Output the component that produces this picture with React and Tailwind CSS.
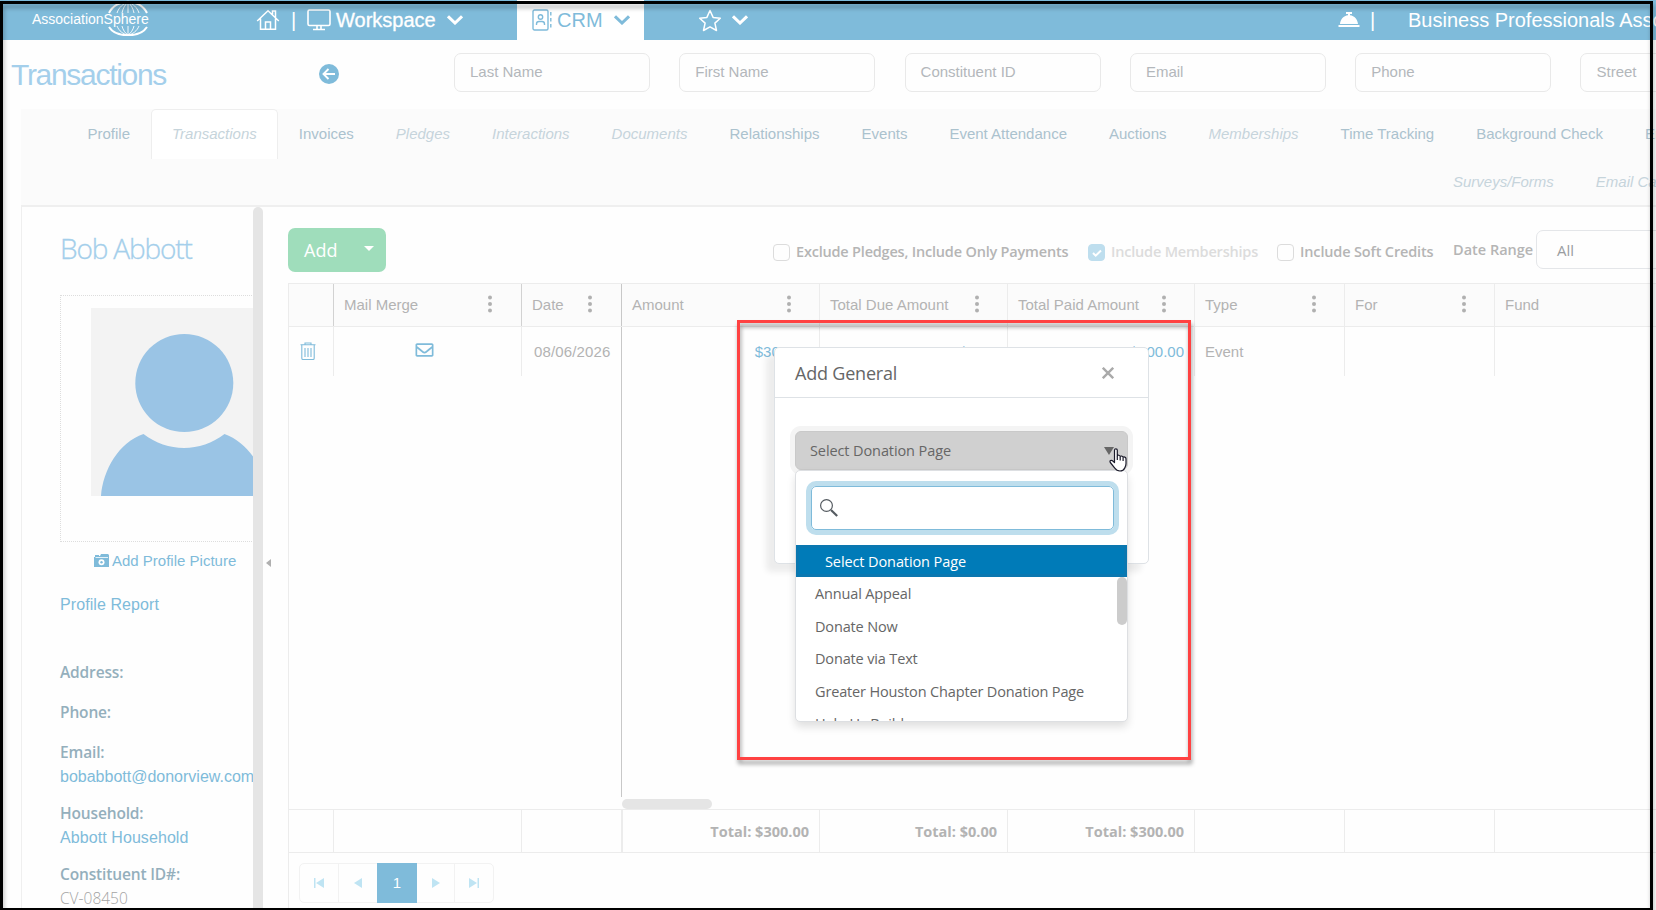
import { FaRegEnvelope } from 'react-icons/fa';
import clsx from 'clsx';

const searchFields = ['Last Name', 'First Name', 'Constituent ID', 'Email', 'Phone', 'Street'];

const tabs = [
  { label: 'Profile' },
  { label: 'Transactions', empty: true, active: true },
  { label: 'Invoices' },
  { label: 'Pledges', empty: true },
  { label: 'Interactions', empty: true },
  { label: 'Documents', empty: true },
  { label: 'Relationships' },
  { label: 'Events' },
  { label: 'Event Attendance' },
  { label: 'Auctions' },
  { label: 'Memberships', empty: true },
  { label: 'Time Tracking' },
  { label: 'Background Check' },
  { label: 'Employment' },
];

const moreTabs = [
  { label: 'Surveys/Forms', empty: true },
  { label: 'Email Campaigns', empty: true },
];

const columns = [
  { key: 'amount', label: 'Amount', width: 'w-[198px]', value: '$300.00', total: 'Total: $300.00', money: true },
  { key: 'due', label: 'Total Due Amount', width: 'w-[188px]', value: '$0.00', total: 'Total: $0.00', money: true },
  { key: 'paid', label: 'Total Paid Amount', width: 'w-[187px]', value: '$300.00', total: 'Total: $300.00', money: true },
  { key: 'type', label: 'Type', width: 'w-[150px]', value: 'Event' },
  { key: 'for', label: 'For', width: 'w-[150px]', value: '' },
  { key: 'fund', label: 'Fund', width: 'w-[200px]', value: '' },
];

const donationPages = ['Annual Appeal', 'Donate Now', 'Donate via Text', 'Greater Houston Chapter Donation Page', 'Help Us Build'];

function Chevron({ className }) {
  return (
    <svg viewBox="0 0 16 10" className={clsx('h-[10px] w-4 shrink-0', className)} fill="none" stroke="currentColor" strokeWidth="3">
      <path d="M1 1.3 8 8l7-6.7" />
    </svg>
  );
}

function Globe() {
  return (
    <svg viewBox="0 0 42 36" className="absolute left-[107px] top-0 h-9 w-[42px]" fill="none" stroke="white" strokeWidth="0.9">
      <path d="M2 13C9-2 33-2 40 13" strokeWidth="2" />
      <path d="M10 13c2-6 6-9 11-11M15 13c1-5 3-8 6-11M32 13c-2-6-6-9-11-11M27 13c-1-5-3-8-6-11M21 1v12" />
      <path d="M2 27c7 11 31 11 38 0" strokeWidth="2" />
      <path d="M10 26c2 5 6 8 11 9M15 26c1 4 3 7 6 9M32 26c-2 5-6 8-11 9M27 26c-1 4-3 7-6 9M21 26v9" />
    </svg>
  );
}

function TopBar() {
  return (
    <header className="flex h-10 shrink-0 items-center bg-[#7fbbda] text-xl text-white">
      <div className="relative h-10 w-[256px] shrink-0">
        <Globe />
        <div className="pl-8 pt-[10px] text-[14px] leading-[18px]">AssociationSphere</div>
      </div>
      <svg viewBox="0 0 24 22" className="h-[22px] w-6 shrink-0" fill="none" stroke="white" strokeWidth="1.5">
        <path d="M1.200 12 12 1.800 22.800 12M4.500 9.500v10.700h15V9.500M9.500 20v-7h5v7M16.500 5.500V2h3v6.500" />
      </svg>
      <span className="ml-[11px] w-[6px] shrink-0">|</span>
      <svg viewBox="0 0 24 22" className="ml-[10px] h-[22px] w-6 shrink-0" fill="none" stroke="white" strokeWidth="1.6">
        <rect x="1" y="1" width="22" height="15.500" rx="1.500" />
        <path d="M10 16.500v3.500M14 16.500v3.500M6 20.500h12" />
      </svg>
      <span className="ml-[5px] w-[111px] shrink-0 [-webkit-text-stroke:0.3px_white]">Workspace</span>
      <Chevron />
      <div className="ml-[54px] flex h-10 w-[127px] shrink-0 items-center bg-white pl-[15px] text-[#7fbbda]">
        <svg viewBox="0 0 20 22" className="h-[22px] w-5" fill="none" stroke="currentColor" strokeWidth="1.4">
          <rect x="1" y="1" width="15" height="20" rx="1.500" />
          <circle cx="8.500" cy="8" r="2.200" />
          <path d="M4.500 16v-1c0-1.500 1-2.500 2.500-2.500h3c1.500 0 2.500 1 2.500 2.500v1" />
          <path d="M18.800 3v16" strokeDasharray="3.500 2.500" />
        </svg>
        <span className="ml-[5px] w-[57px]">CRM</span>
        <Chevron />
      </div>
      <svg viewBox="0 0 24 23" className="ml-[54px] h-[23px] w-6 shrink-0" fill="none" stroke="white" strokeWidth="1.5" strokeLinejoin="round">
        <path d="m12 1.500 3.100 6.900 7.200.8-5.400 4.900 1.600 7.400L12 17.800l-6.500 3.700 1.600-7.400L1.700 9.200l7.200-.8z" />
      </svg>
      <Chevron className="ml-[10px]" />
      <svg viewBox="0 0 22 16" className="ml-[590px] h-4 w-[22px] shrink-0" fill="white">
        <path d="M8 0h6v2h-2v1.300c4.500.5 7.500 4 8 8.700H2c.5-4.700 3.500-8.200 8-8.700V2H8zM.5 13h21v2H.500z" />
      </svg>
      <span className="ml-[10px] w-[38px] shrink-0">|</span>
      <span className="whitespace-nowrap">Business Professionals Association</span>
    </header>
  );
}

function SearchRow() {
  return (
    <div className="flex h-[69px] shrink-0 pt-[13px]">
      <h1 className="w-[307px] shrink-0 pl-[11px] pt-[4px] text-[30px] leading-9 tracking-[-1.3px] text-[#a4cfeb]">Transactions</h1>
      <svg viewBox="0 0 20 20" className="ml-3 mt-[10.5px] h-5 w-5 shrink-0">
        <circle cx="10" cy="10" r="10" fill="#7fbbda" />
        <path d="M9.500 5 4.500 10l5 5M5 10h11" fill="none" stroke="white" strokeWidth="1.900" />
      </svg>
      <div className="ml-[115px] flex shrink-0 gap-[29.3px]">
        {searchFields.map((name) => (
          <div
            key={name}
            className="h-[39px] w-[196px] shrink-0 rounded-[7px] border border-[#e9e9e9] pl-[15px] pt-[9px] text-[15px] leading-[18px] text-[#b3b7bb]"
          >
            {name}
          </div>
        ))}
      </div>
    </div>
  );
}

function Tab({ label, empty, active }) {
  return (
    <div
      className={clsx(
        'h-[50px] shrink-0 whitespace-nowrap rounded-t-[5px] border border-b-0 px-[20px] pt-[15px] text-[15px] leading-[18px]',
        active ? 'border-[#eeeeee] bg-white' : 'border-transparent',
        empty ? 'italic text-[#c6d4db]' : 'text-[#abc2ce]'
      )}
    >
      {label}
    </div>
  );
}

function TabStrip() {
  return (
    <nav className="ml-[21px] flex h-[98px] shrink-0 flex-col border-b-2 border-[#efefef] bg-[#fbfbfb]">
      <div className="flex h-12 pl-[45.5px]">
        {tabs.map((t) => (
          <Tab key={t.label} {...t} />
        ))}
      </div>
      <div className="flex pl-[1411px]">
        {moreTabs.map((t) => (
          <Tab key={t.label} {...t} />
        ))}
      </div>
    </nav>
  );
}

function Field({ label, children }) {
  return (
    <div className="mb-[14px]">
      <div className="font-['Open_Sans','Noto_Sans',sans-serif] text-[15.5px] font-semibold leading-6 tracking-[-0.15px] text-[#94afbc]">{label}</div>
      {children}
    </div>
  );
}

function ProfilePanel() {
  return (
    <aside className="flex w-[242px] shrink-0 border-l border-[#efefef]">
      <div className="w-[231px] shrink-0 overflow-hidden pl-[38px] text-base text-[#7fbbda]">
        <h2 className="pt-[22px] font-['Open_Sans','Noto_Sans',sans-serif] text-[28px] font-light leading-[38px] tracking-[-1.15px] text-[#a4cfeb] [-webkit-text-stroke:0.3px_#a4cfeb]">
          Bob Abbott
        </h2>
        <div className="mt-[28px] h-[247px] w-[260px] border border-dotted border-[#dddddd] pl-[30px] pt-3">
          <svg viewBox="0 0 188 188" className="h-[188px] w-[188px] bg-[#f3f3f3]" fill="#9ac4e5">
            <circle cx="93.300" cy="75" r="49" />
            <path d="M10 188c2-26 18-54 42.500-62 24 18.500 57 18.500 81 0 24.500 9 41 36 43.500 62z" />
          </svg>
        </div>
        <div className="mt-[10px] flex h-[18px] items-center pl-[34px] text-[15px]">
          <svg viewBox="0 0 15 14" className="mr-[3px] h-[14px] w-[15px]">
            <path d="M0 3h1V1h4v1h1l1-2h7l1 1v12H0z" fill="#7fbbda" />
            <path d="M1.500 3.500h12.500" stroke="white" strokeWidth="0.800" />
            <circle cx="7.500" cy="8.300" r="3" fill="white" />
            <circle cx="7.500" cy="8.300" r="1.200" fill="#7fbbda" />
          </svg>
          Add Profile Picture
        </div>
        <div className="mb-[43px] mt-[23px] leading-6 tracking-[0.08px]">Profile Report</div>
        <div className="flex flex-col">
          <Field label="Address:" />
          <div className="mt-[2px]">
            <Field label="Phone:" />
          </div>
          <div className="mt-[2px]">
            <Field label="Email:">
              <div className="-mb-px pt-px leading-[23px]">bobabbott@donorview.com</div>
            </Field>
          </div>
          <Field label="Household:">
            <div className="-mb-px pt-px leading-[23px] tracking-[0.08px]">Abbott Household</div>
          </Field>
          <Field label="Constituent ID#:">
            <div className="pt-px font-['Open_Sans','Noto_Sans',sans-serif] text-[15.5px] font-light leading-[23px] text-[#a4a4a4]">CV-08450</div>
          </Field>
        </div>
      </div>
      <div className="w-[10px] rounded-t-[5px] bg-[#e5e5e5]" />
    </aside>
  );
}

function CheckOption({ label, checked, labelClass }) {
  return (
    <label className="flex h-[17px] items-center">
      <span
        className={clsx(
          'flex h-[17px] w-[17px] items-center justify-center rounded-[4px] border',
          checked ? 'border-[#bedeee] bg-[#bedeee]' : 'border-[#dcdcdc]'
        )}
      >
        {checked && (
          <svg viewBox="0 0 12 12" className="h-3 w-3" fill="none" stroke="white" strokeWidth="2">
            <path d="m2 6 2.700 2.700L10 3.500" />
          </svg>
        )}
      </span>
      <span className={clsx('ml-[6px] whitespace-nowrap pb-[2px]', labelClass)}>{label}</span>
    </label>
  );
}

function Toolbar() {
  return (
    <div className="flex h-[76px] shrink-0 pt-[21px]">
      <button className="flex h-[44px] w-[98px] shrink-0 items-center rounded-[7px] bg-[#9fddbb] pl-[16px] font-['Open_Sans','Noto_Sans',sans-serif] text-[18px] text-white">
        <span className="w-[60px] text-left">Add</span>
        <span className="mb-[3px] border-x-[5px] border-t-[5px] border-x-transparent border-t-white" />
      </button>
      <div className="ml-[387px] flex shrink-0 pt-4 font-['Open_Sans','Noto_Sans',sans-serif] text-[14.5px] font-semibold leading-5 text-[#b5b5b5]">
        <div className="w-[315px]">
          <CheckOption label="Exclude Pledges, Include Only Payments" labelClass="tracking-[-0.2px]" />
        </div>
        <div className="w-[189px]">
          <CheckOption checked label="Include Memberships" labelClass="tracking-[-0.2px] text-[#dcdcdc]" />
        </div>
        <div className="w-[176px]">
          <CheckOption label="Include Soft Credits" labelClass="tracking-[-0.15px]" />
        </div>
      </div>
      <div className="flex shrink-0 pt-[2px] font-['Open_Sans','Noto_Sans',sans-serif] text-[14.5px] text-[#b5b5b5]">
        <span className="w-[83px] whitespace-nowrap pt-[10px] font-semibold leading-5">Date Range</span>
        <div className="h-[39px] w-[180px] rounded-[7px] border border-[#e4e6e9] pl-5 pt-[9px] text-[15px] leading-5 text-[#9a9da1]">All</div>
      </div>
    </div>
  );
}

function MenuDots({ className }) {
  return (
    <svg viewBox="0 0 4 18" className={clsx('h-[18px] w-1', className)} fill="#b0b0b0">
      <circle cx="2" cy="2.500" r="2" />
      <circle cx="2" cy="9" r="2" />
      <circle cx="2" cy="15.500" r="2" />
    </svg>
  );
}

function TransactionsGrid() {
  return (
    <div className="flex min-h-0 flex-1 flex-col border-l border-[#ececec] text-[15px] text-[#b3b3b3]">
      <div className="flex h-[44px] shrink-0 border-y border-[#ececec] bg-[#fbfbfb] leading-[18px]">
        <div className="w-[45px] shrink-0 border-r border-[#d2d2d2]" />
        <div className="flex w-[188px] shrink-0 justify-between border-r border-[#d2d2d2] pl-[10px] pr-[29px] pt-[12px]">
          Mail Merge
          <MenuDots className="-mt-[1px]" />
        </div>
        <div className="flex w-[100px] shrink-0 justify-between border-r border-[#c8c8c8] pl-[10px] pr-[29px] pt-[12px]">
          Date
          <MenuDots className="-mt-[1px]" />
        </div>
        {columns.map((c) => (
          <div key={c.key} className={clsx('flex shrink-0 justify-between whitespace-nowrap border-r border-[#ececec] pl-[10px] pr-[28px] pt-[12px]', c.width)}>
            {c.label}
            <MenuDots className="-mt-[1px]" />
          </div>
        ))}
      </div>

      <div className="flex h-[470px] shrink-0 items-start">
        <div className="flex h-[49px] w-[45px] shrink-0 border-r border-[#ececec] pl-[11px] pt-[15px]">
          <svg viewBox="0 0 16 18" className="h-[18px] w-4" fill="none" stroke="#7fbbda" strokeWidth="1.100">
            <path d="M.5 2.700h15M5 2.500V1h6v1.500M1.800 3v13.300c0 .8.500 1.200 1.200 1.200h10c.7 0 1.200-.4 1.200-1.200V3M5 6v9M8 6v9M11 6v9" />
          </svg>
        </div>
        <div className="flex h-[49px] w-[188px] shrink-0 justify-center border-r border-[#ececec] pr-[6px] pt-[14px]">
          <FaRegEnvelope className="h-[18px] w-[19px] text-[#7fbbda]" />
        </div>
        <div className="h-[470px] w-[100px] shrink-0 border-r border-[#c8c8c8]">
          <div className="h-[49px] pl-[12px] pt-[16px] leading-[18px] tracking-[0.15px]">08/06/2026</div>
        </div>
        {columns.map((c) => (
          <div
            key={c.key}
            className={clsx(
              'h-[49px] shrink-0 border-r border-[#ececec] px-[10px] pt-[16px] leading-[18px]',
              c.width,
              c.money && 'text-right text-[#7fbbda]'
            )}
          >
            {c.value}
          </div>
        ))}
      </div>
      <div className="flex h-3 shrink-0">
        <div className="ml-[333px] mt-[2px] h-[10px] w-[90px] rounded-full bg-[#e5e5e5]" />
      </div>

      <div className="flex h-[44px] shrink-0 border-y border-[#ececec] font-['Open_Sans','Noto_Sans',sans-serif] text-[14.5px] font-bold leading-5">
        <div className="w-[45px] shrink-0 border-r border-[#ececec]" />
        <div className="w-[188px] shrink-0 border-r border-[#ececec]" />
        <div className="w-[101px] shrink-0 border-r-2 border-[#ececec]" />
        {columns.map((c, i) => (
          <div key={c.key} className={clsx('shrink-0 border-r border-[#ececec] pr-[10px] pt-[12px] text-right', i === 0 ? 'w-[197px]' : c.width)}>
            {c.total}
          </div>
        ))}
      </div>

      <Pager />
    </div>
  );
}

function Pager() {
  return (
    <div className="ml-[10px] mt-[10px] flex h-10 w-[195px] shrink-0 rounded-[5px] border border-[#f2f2f2] text-[#bfe4f3]">
      <div className="flex w-[39px] items-center justify-center border-r border-[#f2f2f2]">
        <svg viewBox="0 0 10 10" className="h-[10px] w-[10px]" fill="currentColor">
          <path d="M0 0h1.500v10H0zM10 0v10L2 5z" />
        </svg>
      </div>
      <div className="flex w-[38px] items-center justify-center">
        <svg viewBox="0 0 8 10" className="h-[10px] w-2" fill="currentColor">
          <path d="M8 0v10L0 5z" />
        </svg>
      </div>
      <div className="-my-[1px] flex w-10 items-center justify-center bg-[#7fbbda] pt-[1px] text-[15px] text-white">1</div>
      <div className="flex w-[38px] items-center justify-center border-r border-[#f2f2f2]">
        <svg viewBox="0 0 8 10" className="h-[10px] w-2" fill="currentColor">
          <path d="M0 0v10l8-5z" />
        </svg>
      </div>
      <div className="flex flex-1 items-center justify-center">
        <svg viewBox="0 0 10 10" className="h-[10px] w-[10px]" fill="currentColor">
          <path d="M8.500 0H10v10H8.500zM0 0v10l8-5z" />
        </svg>
      </div>
    </div>
  );
}

function AddGeneralDialog() {
  return (
    <div className="absolute left-[774px] top-[347px] h-[217px] w-[375px] rounded-[5px] border border-[#dee2e6] bg-white font-['Open_Sans','Noto_Sans',sans-serif] text-[#666666] shadow-[-8px_8px_6px_rgba(0,0,0,0.07)]">
      <div className="flex h-[50px] items-center justify-between border-b border-[#dee2e6] pl-5 pr-[34px] pt-px text-[18px]">
        <span className="tracking-[-0.2px]">Add General</span>
        <svg viewBox="0 0 12 12" className="h-3 w-3" stroke="#aaaaaa" strokeWidth="2.400">
          <path d="m.8.8 10.400 10.400M11.200.8.800 11.200" />
        </svg>
      </div>
      <div className="ml-5 mt-[33px] flex h-[39px] w-[333px] items-center justify-between rounded-[6px] border border-[#c9c9c9] bg-[#d0d0d0] pl-[14px] pr-[13px] pt-px text-[14.5px] shadow-[0_0_0_5px_#f4f4f4]">
        <span className="tracking-[-0.1px]">Select Donation Page</span>
        <span className="border-x-[5px] border-t-[8px] border-x-transparent border-t-[#666666]" />
      </div>
      <DonationDropdown />
      <HandCursor />
    </div>
  );
}

function DonationDropdown() {
  return (
    <div className="absolute left-5 top-[122px] flex h-[252px] w-[333px] flex-col overflow-hidden rounded-[5px] border border-[#dddfe2] bg-white text-[14.5px] shadow-[0_5px_8px_rgba(0,0,0,0.12)]">
      <div className="mx-[15px] mt-[15px] flex h-[44px] w-[303px] shrink-0 items-center rounded-[5px] border border-[#7fbbda] pl-2 shadow-[0_0_0_5px_#bedeed]">
        <svg viewBox="0 0 18 18" className="h-[18px] w-[18px]" fill="none" stroke="#555b61">
          <circle cx="6.500" cy="6.500" r="5.900" strokeWidth="1.200" />
          <path d="m11 11 6.200 6" strokeWidth="2.200" />
        </svg>
      </div>
      <div className="mt-[15px] h-8 shrink-0 border-[3px] border-[#0a77b0] bg-[#007bb8] pl-[26px] pt-px leading-[25px] tracking-[-0.1px] text-white">Select Donation Page</div>
      <div className="flex min-h-0 flex-1 justify-between">
        <ul className="pl-[19px] pt-px leading-[32.5px] tracking-[-0.15px]">
          {donationPages.map((page) => (
            <li key={page}>{page}</li>
          ))}
        </ul>
        <div className="h-12 w-[10px] rounded-full bg-[#cccccc]" />
      </div>
    </div>
  );
}

function HandCursor() {
  return (
    <svg viewBox="0 0 18 24" className="absolute left-[334px] top-[100px] h-6 w-[18px]" fill="white" stroke="#1a1a2a" strokeWidth="1.200" strokeLinejoin="round">
      <path d="M5.500 14.500V2.300C5.500.3 8.300.3 8.300 2.300v5.500c.3-1 2.800-.8 2.900.8.400-1 2.700-.7 2.900.8.600-.8 2.900-.4 2.900 1.400v4.700c0 2-.6 2.900-1.300 4.500-.8 2-2.200 3-4.700 3-3 0-4-1-5-2.700L1.300 14.500c-1-1.800 1-2.700 2.200-1.700z" />
      <path d="M8.300 8v4M11.200 9v3.500M14.100 10v3" />
    </svg>
  );
}

export default function App() {
  return (
    <div className="relative flex h-[910px] w-[1656px] flex-col overflow-hidden bg-[#fefefe] font-['Liberation_Sans',Arial,sans-serif]">
      <TopBar />
      <SearchRow />
      <TabStrip />
      <main className="ml-[21px] flex min-h-0 flex-1">
        <ProfilePanel />
        <div className="flex w-[25px] shrink-0 pl-[3px] pt-[352px]">
          <span className="h-2 border-y-4 border-r-[5px] border-y-transparent border-r-[#b0b0b0]" />
        </div>
        <section className="flex w-[1368px] shrink-0 flex-col overflow-hidden">
          <Toolbar />
          <TransactionsGrid />
        </section>
      </main>
      <AddGeneralDialog />
      <div className="absolute left-[737px] top-[320px] h-[440px] w-[454px] border-[3px] border-[#ff4242] [filter:drop-shadow(1px_4px_2px_rgba(0,0,0,0.4))]" />
      <div className="absolute left-0 top-px h-[910px] w-[1653px] border-[3px] border-black [filter:drop-shadow(1px_4px_2px_rgba(0,0,0,0.3))]" />
    </div>
  );
}
